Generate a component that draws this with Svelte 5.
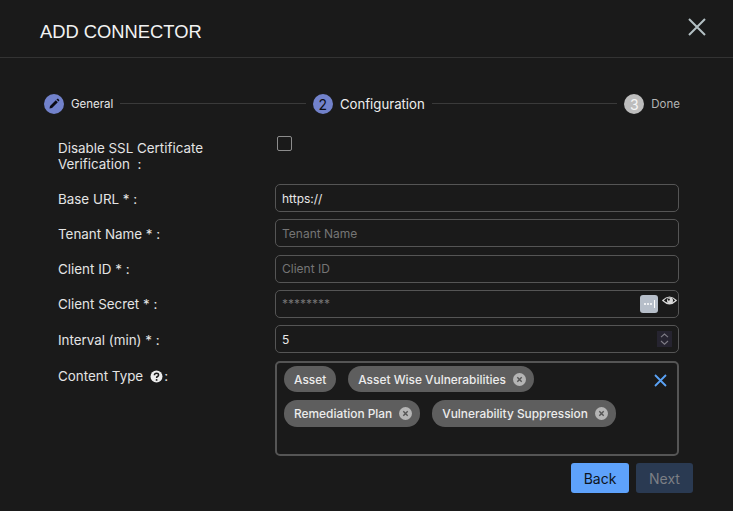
<script>
  const steps = [
    { key: 'general', label: 'General', state: 'edit' },
    { key: 'config', label: 'Configuration', state: 'active', num: 2 },
    { key: 'done', label: 'Done', state: 'todo', num: 3 }
  ];

  const fields = [
    { label: 'Base URL * :', value: 'https://' },
    { label: 'Tenant Name * :', placeholder: 'Tenant Name' },
    { label: 'Client ID * :', placeholder: 'Client ID' }
  ];

  const rows = [
    [
      { label: 'Asset', removable: false },
      { label: 'Asset Wise Vulnerabilities', removable: true }
    ],
    [
      { label: 'Remediation Plan', removable: true },
      { label: 'Vulnerability Suppression', removable: true }
    ]
  ];
</script>

<div class="dialog">
  <header>
    <h2>ADD CONNECTOR</h2>
    <button class="close" aria-label="Close">
      <svg width="18" height="18" viewBox="0 0 18 18">
        <path d="M1 1 L17 17 M17 1 L1 17" stroke="#b4c0c4" stroke-width="2" fill="none" />
      </svg>
    </button>
  </header>

  <div class="stepper">
    {#each steps as step, i}
      {#if i > 0}<div class="line"></div>{/if}
      <div class="step {step.state}">
        <span class="dot">
          {#if step.state === 'edit'}
            <svg width="12" height="12" viewBox="0 0 12 12">
              <path d="M1.5 10.5 L2 8 L7.8 2.2 L9.8 4.2 L4 10 Z M8.5 1.5 L9.3 0.8 Q9.7 0.5 10.1 0.8 L11.2 1.9 Q11.5 2.3 11.2 2.7 L10.5 3.5 Z" fill="#0c0c14" />
            </svg>
          {:else}
            {step.num}
          {/if}
        </span>
        <span class="step-label">{step.label}</span>
      </div>
    {/each}
  </div>

  <form on:submit|preventDefault>
    <div class="row ssl">
      <label for="ssl">Disable SSL Certificate Verification&nbsp; :</label>
      <input id="ssl" type="checkbox" />
    </div>

    {#each fields as field}
      <div class="row">
        <label>{field.label}</label>
        <div class="box">
          {#if field.value}
            <span class="value">{field.value}</span>
          {:else}
            <span class="placeholder">{field.placeholder}</span>
          {/if}
        </div>
      </div>
    {/each}

    <div class="row">
      <label>Client Secret * :</label>
      <div class="box secret">
        <span class="placeholder">********</span>
        <span class="pw-key">
          <i></i><i></i><i></i><b></b>
        </span>
        <svg class="eye" width="15" height="12" viewBox="0 0 15 12">
          <path d="M0.8 5.5 Q7.5 -1.5 14.2 5.5 Q7.5 12 0.8 5.5 Z" fill="none" stroke="#d8d8d8" stroke-width="1.2" />
          <circle cx="8" cy="5.4" r="3" fill="#d8d8d8" />
          <circle cx="6.8" cy="4.6" r="1.1" fill="#1a1a1a" />
        </svg>
      </div>
    </div>

    <div class="row">
      <label>Interval (min) * :</label>
      <div class="box number">
        <span class="value">5</span>
        <span class="spin">
          <svg width="15" height="16" viewBox="0 0 15 16">
            <path d="M4 6.2 L7.5 3 L11 6.2 M4 10 L7.5 13.2 L11 10" fill="none" stroke="#7f7d86" stroke-width="1.1" />
          </svg>
        </span>
      </div>
    </div>

    <div class="row content-row">
      <label>
        Content Type
        <svg class="help" width="13" height="13" viewBox="0 0 13 13">
          <circle cx="6.5" cy="6.5" r="6" fill="#ececec" />
          <path d="M4.4 5.2 Q4.5 3.2 6.5 3.2 Q8.6 3.2 8.6 4.9 Q8.6 5.9 7.5 6.5 Q6.6 7 6.6 7.9" fill="none" stroke="#1a1a1a" stroke-width="1.5" />
          <circle cx="6.6" cy="9.9" r="0.95" fill="#1a1a1a" />
        </svg>:
      </label>
      <div class="multi">
        <div class="chips">
          {#each rows as chips}
            <div class="chip-row">
              {#each chips as chip}
                <span class="chip">
                  {chip.label}
                  {#if chip.removable}
                    <svg class="chip-x" width="13" height="13" viewBox="0 0 13 13">
                      <circle cx="6.5" cy="6.5" r="6.5" fill="#b5b5b5" />
                      <path d="M4.3 4.3 L8.7 8.7 M8.7 4.3 L4.3 8.7" stroke="#555" stroke-width="1.4" />
                    </svg>
                  {/if}
                </span>
              {/each}
            </div>
          {/each}
        </div>
        <svg class="clear" width="13" height="13" viewBox="0 0 13 13">
          <path d="M1 1 L12 12 M12 1 L1 12" stroke="#5aa2f5" stroke-width="1.8" fill="none" />
        </svg>
      </div>
    </div>

    <div class="actions">
      <button type="button" class="btn back">Back</button>
      <button type="button" class="btn next" disabled>Next</button>
    </div>
  </form>
</div>

<style>
  :global(body) {
    margin: 0;
    background: #1a1a1a;
  }

  .dialog {
    width: 733px;
    height: 511px;
    overflow: hidden;
    background: #1a1a1a;
    color: #e6e6e6;
    font-family: Inter, "Liberation Sans", sans-serif;
    font-size: 13.4px;
    box-sizing: border-box;
  }

  header {
    height: 57px;
    display: flex;
    justify-content: space-between;
    border-bottom: 1px solid #333;
    padding: 0 27px 0 40px;
  }

  h2 {
    margin: 21px 0 0;
    font-family: "Liberation Sans", Arial, sans-serif;
    font-size: 18.35px;
    line-height: 21px;
    font-weight: 400;
    color: #f2f2f2;
  }

  .close {
    margin: 18px 0 0;
    padding: 0;
    width: 18px;
    height: 18px;
    border: none;
    background: none;
  }

  .stepper {
    display: flex;
    align-items: center;
    height: 20px;
    margin: 36px 53px 0 44px;
  }

  .step {
    display: flex;
    align-items: center;
    gap: 7px;
  }

  .dot {
    width: 20px;
    height: 20px;
    border-radius: 50%;
    background: #7282cb;
    color: #0d0d14;
    display: flex;
    align-items: center;
    justify-content: center;
    font-size: 14px;
  }

  .step-label {
    font-size: 11.5px;
    color: #e6e6e6;
  }

  .step.active .step-label {
    font-size: 13.2px;
    color: #eee;
  }

  .step.todo .dot {
    background: #bdbdbd;
    color: #f5f5f5;
  }

  .step.todo .step-label {
    color: #b4b4b4;
  }

  .line {
    flex: 1;
    height: 1px;
    background: #3a3a3a;
    margin: 0 7px 1px;
  }

  form {
    margin: 0;
    padding: 0 40px 0 58px;
  }

  .row {
    display: grid;
    grid-template-columns: 217px 404px;
    height: 28px;
    margin-bottom: 7.25px;
    align-items: center;
  }

  label {
    font-size: 13.4px;
    line-height: 16px;
    color: #e4e4e4;
    padding-top: 1px;
  }

  .ssl {
    height: 43px;
    margin: 22px 0 5px;
    align-items: start;
  }

  .ssl label {
    padding-top: 4px;
    width: 165px;
  }

  input[type='checkbox'] {
    appearance: none;
    width: 15px;
    height: 15px;
    margin: 0 0 0 2px;
    border: 1px solid #8c8c8c;
    border-radius: 2px;
    background: transparent;
  }

  .box {
    box-sizing: border-box;
    height: 28px;
    border: 1px solid #555;
    border-radius: 5px;
    padding: 0 6px;
    display: flex;
    align-items: center;
    font-size: 12px;
    position: relative;
  }

  .value {
    color: #e8e8e8;
    font-size: 12px;
  }

  .placeholder {
    color: #757575;
  }

  .pw-key {
    position: absolute;
    right: 20px;
    top: 4px;
    width: 18px;
    height: 18px;
    border-radius: 3px;
    background: #b6bec9;
    display: flex;
    align-items: center;
    justify-content: center;
    gap: 1px;
  }

  .pw-key i {
    width: 2px;
    height: 2px;
    border-radius: 50%;
    background: #fff;
  }

  .pw-key b {
    width: 1px;
    height: 8px;
    background: #fff;
    margin-left: 1px;
  }

  .eye {
    position: absolute;
    right: 1px;
    top: 4px;
  }

  .spin {
    position: absolute;
    right: 6px;
    top: 5px;
    width: 15px;
    height: 16px;
    background: #262430;
    display: flex;
  }

  .content-row {
    height: 95px;
    align-items: start;
    margin: 8px 0 7px;
  }

  .content-row label {
    display: flex;
    align-items: center;
    margin-top: 6px;
  }

  .help {
    margin: 0 1px 0 7px;
  }

  .multi {
    box-sizing: border-box;
    height: 95px;
    border: 2px solid #555;
    border-radius: 5px;
    position: relative;
    padding: 3px 7px;
  }

  .chips {
    display: flex;
    flex-direction: column;
    gap: 8px;
  }

  .chip-row {
    display: flex;
    gap: 12px;
  }

  .chip {
    height: 26px;
    border-radius: 13px;
    background: #5e5e5e;
    color: #ececec;
    font-size: 11.9px;
    font-weight: 500;
    display: flex;
    align-items: center;
    gap: 7px;
    padding: 0 8px 0 10px;
    white-space: nowrap;
  }

  .chip-row:last-child .chip {
    height: 27px;
  }

  .chip:not(:has(svg)) {
    padding-right: 10px;
  }

  .clear {
    position: absolute;
    right: 10px;
    top: 11px;
  }

  .actions {
    display: flex;
    justify-content: flex-end;
    gap: 7px;
  }

  .btn {
    height: 30px;
    border: none;
    border-radius: 3px;
    font-family: inherit;
    font-size: 14px;
    padding: 0;
  }

  .back {
    width: 58px;
    background: #5ea2fb;
    color: #0e1420;
  }

  .next {
    width: 57px;
    background: #2a3a52;
    color: #7c7f85;
  }
</style>
